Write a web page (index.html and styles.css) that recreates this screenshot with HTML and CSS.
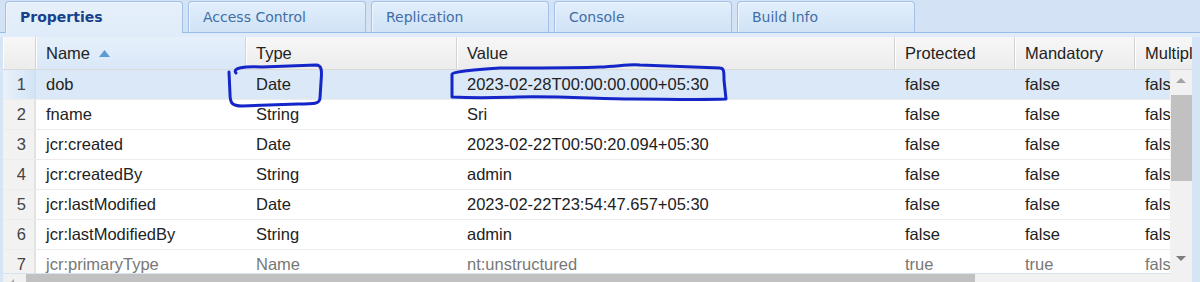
FILE: index.html
```html
<!DOCTYPE html>
<html lang="en">
<head>
    <meta charset="UTF-8">
    <meta name="viewport" content="width=device-width, initial-scale=1.0">
    <title>Properties</title>
    <link rel="stylesheet" href="styles.css">
</head>
<body>
    <div class="page">
        <div class="tabs">
            <div class="tab active">Properties</div>
            <div class="tab">Access Control</div>
            <div class="tab">Replication</div>
            <div class="tab">Console</div>
            <div class="tab">Build Info</div>
        </div>
        <div class="strip"></div>

        <div class="grid">
            <div class="head">
                <div class="hc num"></div>
                <div class="hc c-name sorted">Name
                    <svg class="sort" width="11" height="7" viewBox="0 0 11 7"><path d="M0 7 L5.5 0 L11 7 Z" fill="#5b9bd5"/></svg>
                </div>
                <div class="hc c-type">Type</div>
                <div class="hc c-value">Value</div>
                <div class="hc c-small">Protected</div>
                <div class="hc c-small">Mandatory</div>
                <div class="hc c-small">Multiple</div>
            </div>

            <div class="body">
                <div class="rows-area">
                    <div class="rows">
                        <div class="row selected">
                            <div class="cell num">1</div>
                            <div class="cell c-name">dob</div>
                            <div class="cell c-type">Date</div>
                            <div class="cell c-value">2023-02-28T00:00:00.000+05:30</div>
                            <div class="cell c-small">false</div>
                            <div class="cell c-small">false</div>
                            <div class="cell c-small">false</div>
                        </div>
                        <div class="row">
                            <div class="cell num">2</div>
                            <div class="cell c-name">fname</div>
                            <div class="cell c-type">String</div>
                            <div class="cell c-value">Sri</div>
                            <div class="cell c-small">false</div>
                            <div class="cell c-small">false</div>
                            <div class="cell c-small">false</div>
                        </div>
                        <div class="row">
                            <div class="cell num">3</div>
                            <div class="cell c-name">jcr:created</div>
                            <div class="cell c-type">Date</div>
                            <div class="cell c-value">2023-02-22T00:50:20.094+05:30</div>
                            <div class="cell c-small">false</div>
                            <div class="cell c-small">false</div>
                            <div class="cell c-small">false</div>
                        </div>
                        <div class="row">
                            <div class="cell num">4</div>
                            <div class="cell c-name">jcr:createdBy</div>
                            <div class="cell c-type">String</div>
                            <div class="cell c-value">admin</div>
                            <div class="cell c-small">false</div>
                            <div class="cell c-small">false</div>
                            <div class="cell c-small">false</div>
                        </div>
                        <div class="row">
                            <div class="cell num">5</div>
                            <div class="cell c-name">jcr:lastModified</div>
                            <div class="cell c-type">Date</div>
                            <div class="cell c-value">2023-02-22T23:54:47.657+05:30</div>
                            <div class="cell c-small">false</div>
                            <div class="cell c-small">false</div>
                            <div class="cell c-small">false</div>
                        </div>
                        <div class="row">
                            <div class="cell num">6</div>
                            <div class="cell c-name">jcr:lastModifiedBy</div>
                            <div class="cell c-type">String</div>
                            <div class="cell c-value">admin</div>
                            <div class="cell c-small">false</div>
                            <div class="cell c-small">false</div>
                            <div class="cell c-small">false</div>
                        </div>
                        <div class="row protected">
                            <div class="cell num">7</div>
                            <div class="cell c-name">jcr:primaryType</div>
                            <div class="cell c-type">Name</div>
                            <div class="cell c-value">nt:unstructured</div>
                            <div class="cell c-small">true</div>
                            <div class="cell c-small">true</div>
                            <div class="cell c-small">false</div>
                        </div>
                    </div>
                    <div class="hscroll">
                        <span class="arrow-left"></span>
                        <div class="hthumb"></div>
                    </div>
                </div>
                <div class="vscroll">
                    <span class="arrow-up"></span>
                    <div class="vthumb"></div>
                    <span class="arrow-down"></span>
                </div>
            </div>
        </div>

        <!-- hand-drawn marks on the screenshot -->
        <svg class="marks" width="1200" height="282" viewBox="0 0 1200 282">
            <path d="M236 73 C232 68 244 66 262 67 L316 65 C322 65 322 71 321 82 L320 98 C320 104 314 104 298 104 L242 106 C232 106 230 103 230 94 L229 72"
                  fill="none" stroke="#1526c9" stroke-width="3" stroke-linecap="round" stroke-linejoin="round"/>
            <path d="M452 97 L452 74 C452 72 470 70 500 68 C540 68 580 68 600 67 C620 66 630 64 640 65 L720 68 C724 68 724 72 724 80 L726 99 C700 100 660 99 633 99 C600 99 560 96 517 97 C490 98 470 98 452 97"
                  fill="none" stroke="#1526c9" stroke-width="3" stroke-linecap="round" stroke-linejoin="round"/>
        </svg>
    </div>
</body>
</html>
```

FILE: styles.css
```css
body {
    margin: 0;
    padding: 0;
    background-color: #d6e5f6;
}

.page {
    position: relative;
    width: 1200px;
    height: 282px;
    overflow: hidden;
    background-color: #d6e5f6;
}

/* tab strip */
.tabs {
    display: flex;
    gap: 5px;
    height: 32px;
    padding-left: 5px;
    border-bottom: 1px solid #99bbe8;
    background-color: #d3e3f5;
    box-sizing: content-box;
}

.tab {
    width: 178px;
    height: 31px;
    margin-top: 1px;
    padding-left: 14px;
    box-sizing: border-box;
    border: 1px solid #a3c1e6;
    border-bottom: none;
    border-radius: 4px 4px 0 0;
    background: linear-gradient(#e2eefb, #d0e3f7);
    box-shadow: inset 1px 1px 0 #eef5fd;
    font-family: "DejaVu Sans", Tahoma, sans-serif;
    font-size: 14px;
    line-height: 30px;
    color: #416ea6;
}

.tab.active {
    height: 32px;
    margin-bottom: -1px;
    background: linear-gradient(#e6f0fb, #e0ecf9);
    color: #15428b;
    font-weight: bold;
}

.strip {
    height: 4px;
    background-color: #e0ecf9;
}

/* grid */
.grid {
    margin-left: 3px;
    width: 1189px;
    font-family: "Liberation Sans", Arial, sans-serif;
    font-size: 16.5px;
    color: #222;
}

.head {
    display: flex;
    height: 32px;
    background: linear-gradient(#f7f7f7, #ececec);
    border-bottom: 1px solid #d9d9d9;
    overflow: hidden;
}

.hc {
    flex-shrink: 0;
    box-sizing: border-box;
    padding-left: 10px;
    line-height: 32px;
    border-right: 1px solid #d3d3d3;
    box-shadow: inset 1px 0 0 #fff;
    white-space: nowrap;
    overflow: hidden;
}

.hc.sorted {
    background: linear-gradient(#e6f0fb, #d9e7f7);
}

.sort {
    margin-left: 4px;
    vertical-align: 2px;
}

.num {
    width: 33px;
    padding-left: 0;
}

.c-name { width: 210px; }
.c-type { width: 211px; }
.c-value { width: 438px; }
.c-small { width: 120px; }

.body {
    display: flex;
}

.rows-area {
    width: 1167px;
    overflow: hidden;
}

.rows {
    height: 203px;
    background-color: #fff;
    overflow: hidden;
}

.row {
    display: flex;
    height: 30px;
    border-bottom: 1px solid #ececec;
    box-sizing: border-box;
}

.cell {
    flex-shrink: 0;
    box-sizing: border-box;
    padding-left: 10px;
    line-height: 29px;
    white-space: nowrap;
    overflow: hidden;
}

.cell.num {
    padding: 0 8px 0 0;
    text-align: right;
    color: #444;
    background-color: #f2f2f2;
    border-right: 2px solid #e2e2e2;
}

.row.selected {
    background-color: #dbe8f7;
}

.row.selected .cell.num {
    background: linear-gradient(90deg, #e9f1fb, #d3e4f6);
    border-right-color: #cfe0f3;
}

.row.protected {
    color: #777;
}

/* scrollbars */
.hscroll {
    position: relative;
    height: 10px;
    background-color: #f1f1f1;
}

.hthumb {
    margin-left: 23px;
    margin-top: 1px;
    width: 949px;
    height: 12px;
    background-color: #c1c1c1;
}

.arrow-left {
    position: absolute;
    left: 6px;
    top: 5px;
    border-right: 5px solid #a3a3a3;
    border-top: 5px solid transparent;
    border-bottom: 5px solid transparent;
}

.vscroll {
    position: relative;
    width: 22px;
    height: 213px;
    background-color: #f1f1f1;
}

.vthumb {
    margin-top: 25px;
    margin-left: 1px;
    width: 21px;
    height: 86px;
    background-color: #c1c1c1;
}

.arrow-up,
.arrow-down {
    position: absolute;
    left: 6px;
    border-left: 5px solid transparent;
    border-right: 5px solid transparent;
}

.arrow-up {
    top: 8px;
    border-bottom: 5px solid #a3a3a3;
}

.arrow-down {
    top: 186px;
    border-top: 5px solid #7d7d7d;
}

.marks {
    position: absolute;
    left: 0;
    top: 0;
    pointer-events: none;
}
```
